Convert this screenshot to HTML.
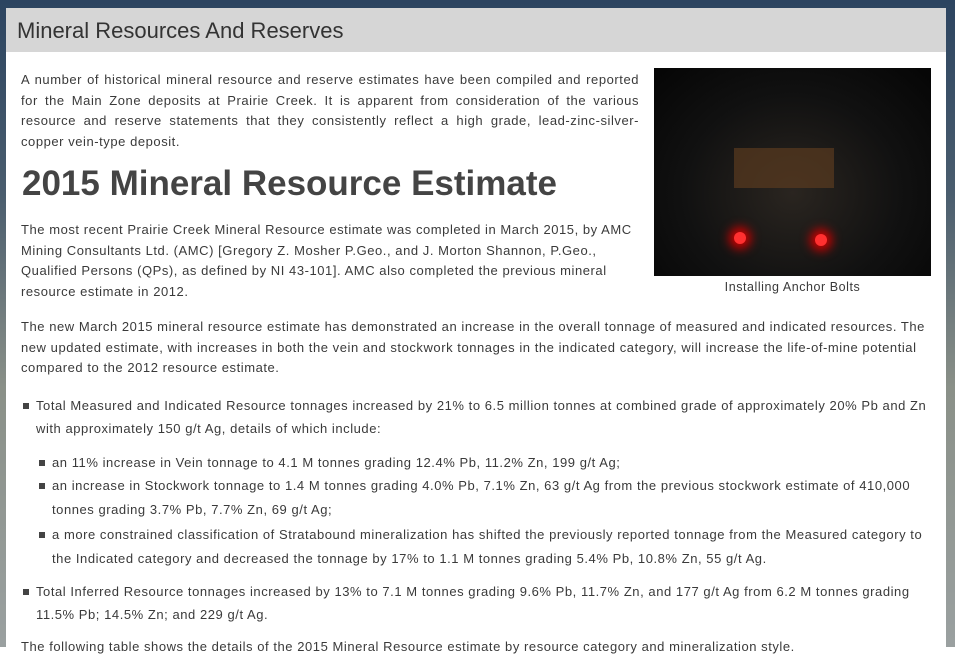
<!DOCTYPE html>
<html><head><style>
body{margin:0;width:955px;height:647px;overflow:hidden;font-family:"Liberation Sans",sans-serif;position:relative}
.bg{position:absolute;inset:0;background:linear-gradient(180deg,#2c4460 0,#4a5d6e 30%,#8a9088 60%,#9aa0a0 100%)}
.panel{position:absolute;left:6px;top:8px;width:940px;height:660px;background:#fff}
.hd{height:44px;background:#d6d6d6;color:#333;font-size:22px;line-height:46px;padding-left:11px}
.c{position:absolute;left:21px;top:60px;width:910px;color:#3a3a3a;font-size:13px;letter-spacing:.55px}
p{margin:0;line-height:20.5px}
.j{text-align:justify;width:618px}
h2{font-size:35px;margin:11px 0 15px 1px;color:#444;font-weight:bold;line-height:42px;letter-spacing:0}
.img{position:absolute;left:633px;top:8px;width:277px;height:208px;background:radial-gradient(ellipse at 50% 60%,#2a2520 0,#111 55%,#050505 100%)}
.cap{position:absolute;left:633px;top:220px;width:277px;text-align:center;font-size:12.5px}
ul{margin:0;padding:0;list-style:none}
li{position:relative;padding-left:15px;line-height:23px}
li:before{content:"";position:absolute;left:2px;top:9px;width:6px;height:6px;background:#444}
ul ul li{line-height:23.5px}
</style></head><body>
<div class="bg"></div>
<div class="panel"><div class="hd">Mineral Resources And Reserves</div></div>
<div class="c">
<div class="img"><div style="position:absolute;left:80px;top:80px;width:100px;height:40px;background:#5a3a20;opacity:.7"></div><div style="position:absolute;left:80px;top:164px;width:12px;height:12px;border-radius:50%;background:#ff3030;box-shadow:0 0 10px 5px #c00"></div><div style="position:absolute;left:161px;top:166px;width:12px;height:12px;border-radius:50%;background:#ff3030;box-shadow:0 0 10px 5px #c00"></div></div>
<div class="cap">Installing Anchor Bolts</div>
<p class="j" style="padding-top:10px">A number of historical mineral resource and reserve estimates have been compiled and reported for the Main Zone deposits at Prairie Creek. It is apparent from consideration of the various resource and reserve statements that they consistently reflect a high grade, lead-zinc-silver-copper vein-type deposit.</p>
<h2>2015 Mineral Resource Estimate</h2>
<p style="width:622px">The most recent Prairie Creek Mineral Resource estimate was completed in March 2015, by AMC Mining Consultants Ltd. (AMC) [Gregory Z. Mosher P.Geo., and J. Morton Shannon, P.Geo., Qualified Persons (QPs), as defined by NI 43-101]. AMC also completed the previous mineral resource estimate in 2012.</p>
<p style="margin-top:15px">The new March 2015 mineral resource estimate has demonstrated an increase in the overall tonnage of measured and indicated resources. The new updated estimate, with increases in both the vein and stockwork tonnages in the indicated category, will increase the life-of-mine potential compared to the 2012 resource estimate.</p>
<ul style="margin-top:15px">
<li>Total Measured and Indicated Resource tonnages increased by 21% to 6.5 million tonnes at combined grade of approximately 20% Pb and Zn with approximately 150 g/t Ag, details of which include:
<ul style="margin:11px 0 10px 1px">
<li>an 11% increase in Vein tonnage to 4.1 M tonnes grading 12.4% Pb, 11.2% Zn, 199 g/t Ag;</li>
<li>an increase in Stockwork tonnage to 1.4 M tonnes grading 4.0% Pb, 7.1% Zn, 63 g/t Ag from the previous stockwork estimate of 410,000 tonnes grading 3.7% Pb, 7.7% Zn, 69 g/t Ag;</li>
<li style="margin-top:2px">a more constrained classification of Stratabound mineralization has shifted the previously reported tonnage from the Measured category to the Indicated category and decreased the tonnage by 17% to 1.1 M tonnes grading 5.4% Pb, 10.8% Zn, 55 g/t Ag.</li>
</ul></li>
<li>Total Inferred Resource tonnages increased by 13% to 7.1 M tonnes grading 9.6% Pb, 11.7% Zn, and 177 g/t Ag from 6.2 M tonnes grading 11.5% Pb; 14.5% Zn; and 229 g/t Ag.</li>
</ul>
<p style="margin-top:11px">The following table shows the details of the 2015 Mineral Resource estimate by resource category and mineralization style.</p>
</div>
</body></html>
